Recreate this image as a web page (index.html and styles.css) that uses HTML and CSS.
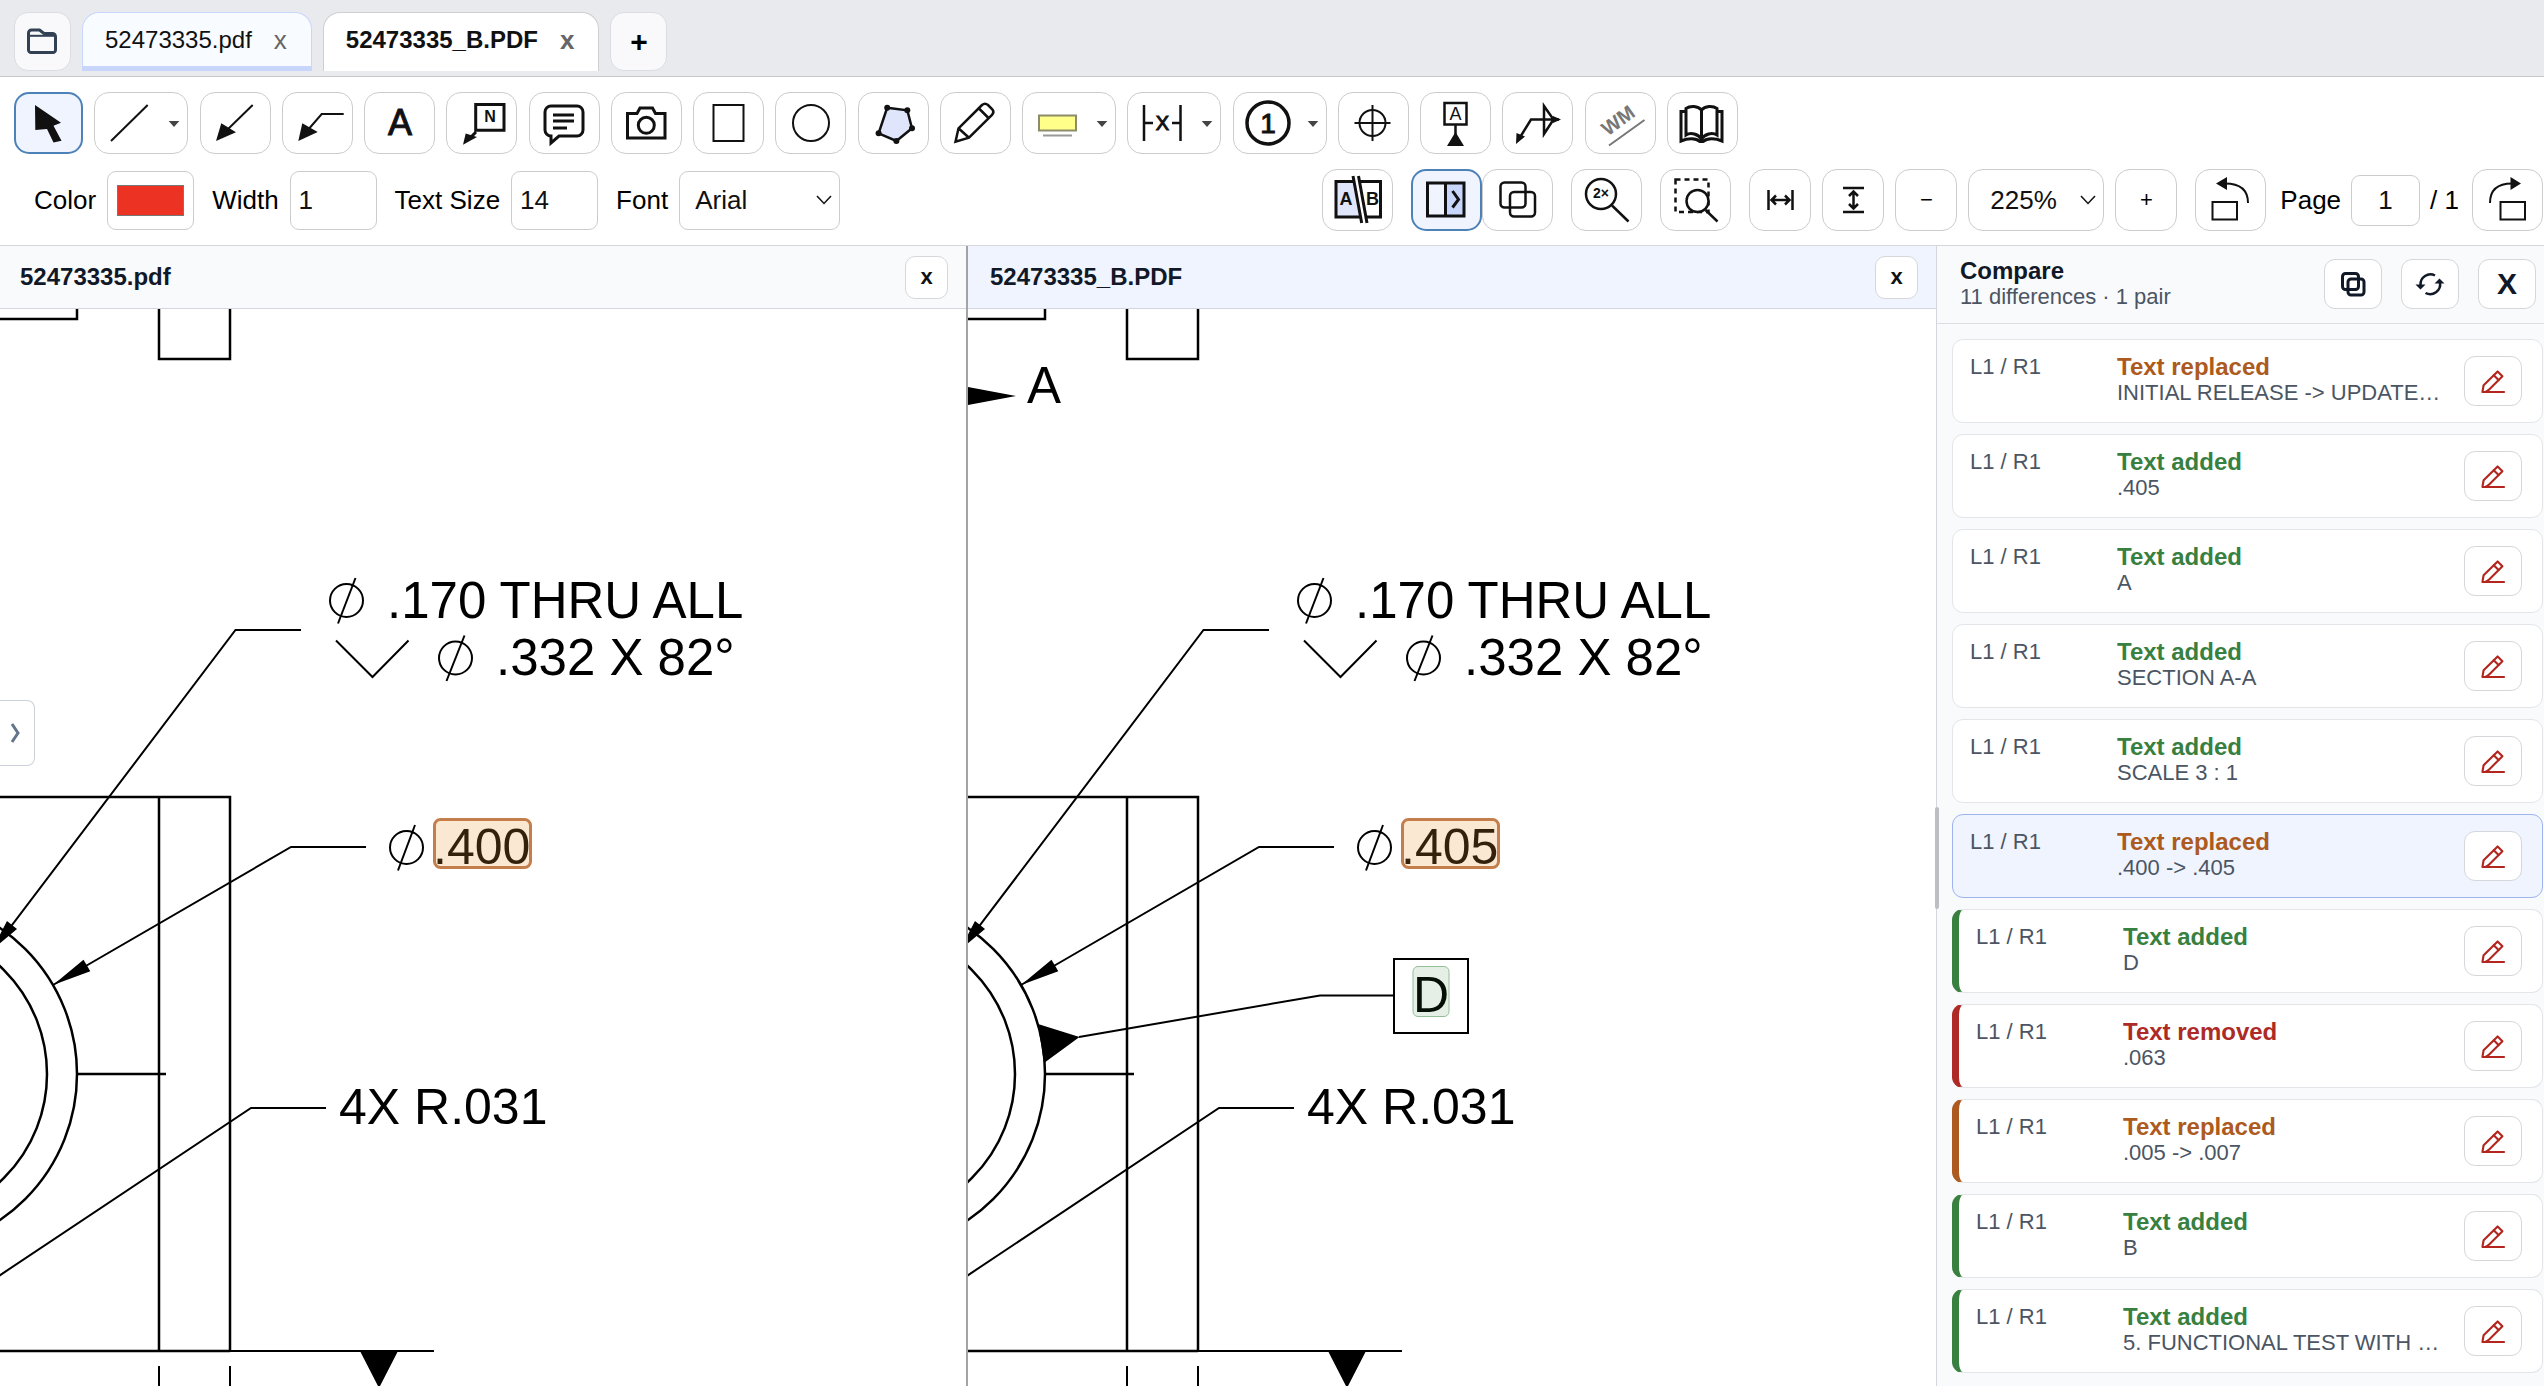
FILE: index.html
```html
<!DOCTYPE html>
<html lang="en">
<head>
<meta charset="utf-8">
<title>52473335_B.PDF</title>
<link rel="stylesheet" href="styles.css">
</head>
<body>
<svg class="sprite" aria-hidden="true">
  <symbol id="i-edit" viewBox="0 0 58 50"><g fill="none" stroke="#b3261e" stroke-width="2.2" stroke-linejoin="round" stroke-linecap="round"><path d="M18 36.4h22.5M18 36.4l1.2-7L33.8 15l5 5L25 33.8q-2 2-4 2.400z"/><path d="M29.800 19l5 5"/></g></symbol>
  <g id="part-view">
    <g fill="none" stroke="#000" stroke-width="2.500">
      <path d="M0 319H77V300M159 300V359H230V300"/>
      <path d="M0 797H230V1351M159 797V1351M0 1351H230"/>
      <circle cx="-100" cy="1074" r="177"/>
      <circle cx="-100" cy="1074" r="147"/>
      <path d="M77 1074H166"/>
    </g>
    <g fill="none" stroke="#000" stroke-width="2">
      <path d="M301 630H235.500L0 941M366 847H291L53 985M326 1108H251L-20 1288.500M230 1351H434M159 1366V1400M230 1366V1400"/>
      <circle cx="346.500" cy="600.500" r="16.500"/><path d="M355.500 578L338 623.500"/>
      <circle cx="455.500" cy="658" r="16.500"/><path d="M464.500 635.500L446.500 681"/>
      <circle cx="406.500" cy="847.500" r="16.500"/><path d="M415 825L398 870.500"/>
      <path d="M336 640.500L372.500 677L408.500 640.500"/>
    </g>
    <path d="M7 921L17 929L-8 950ZM53 985L83.500 959.700L90.300 971.300ZM360 1351H398L379 1388Z"/>
  </g>
</svg>

<header class="tabbar">
  <button class="tab-btn" aria-label="Open file"><svg width="55" height="57" viewBox="1 1 55 57" fill="none" stroke="#334155" stroke-width="3" stroke-linejoin="round"><path d="M14.500 21a3 3 0 0 1 3-3h8l4.500 3.500h8.500a3 3 0 0 1 3 3V38a2.500 2.500 0 0 1-2.500 2.500H17a2.500 2.500 0 0 1-2.500-2.500z"/><path d="M15 23.800H41" stroke-width="2"/></svg></button>
  <div class="tab"><span>52473335.pdf</span><button class="tab-x" aria-label="Close 52473335.pdf">x</button></div>
  <div class="tab active"><span>52473335_B.PDF</span><button class="tab-x" aria-label="Close 52473335_B.PDF">x</button></div>
  <button class="tab-btn plus" aria-label="New tab">+</button>
</header>

<section class="toolbar">
  <div class="tools">
    <button class="tool on" aria-label="Select"><svg viewBox="1 1 70 60"><path d="M22 13L48 30.700L40.500 33.700L48.500 48.700L40.500 50.500L34 37L22.300 38Z"/></svg></button>
    <button class="tool wide" aria-label="Line"><svg viewBox="1 1 92 60"><path class="s2" d="M17 49L53.700 13"/><path class="caret" d="M74.700 29h10.600l-5.300 6z"/></svg></button>
    <button class="tool" aria-label="Arrow"><svg viewBox="1 1 70 60"><path class="s2" d="M53.700 13L26 40"/><path d="M17 49L22.300 31.300L37 40.300Z"/></svg></button>
    <button class="tool" aria-label="Leader"><svg viewBox="1 1 70 60"><path class="s2" d="M62.700 22H40.700L26 39"/><path d="M17.300 49L21.300 31.300L36.700 40Z"/></svg></button>
    <button class="tool" aria-label="Text"><svg viewBox="1 1 70 60"><text class="medium" x="36" y="43" font-size="36">A</text></svg></button>
    <button class="tool" aria-label="Note"><svg viewBox="1 1 70 60"><path class="s3" d="M29.700 12.500H58V38.300H29.700ZM30 40L25 45"/><path d="M17 52.700L19.700 41.500L31 45Z"/><text x="44" y="30" font-size="16" font-weight="700">N</text></svg></button>
    <button class="tool" aria-label="Comment"><svg viewBox="1 1 70 60"><path class="s3" d="M23 14H49a6 6 0 0 1 6 6V38a6 6 0 0 1-6 6H31L23 51V44a6 6 0 0 1-6-6V20a6 6 0 0 1 6-6Z"/><path class="s3" d="M25 23H46M25 29H46M25 36H39"/></svg></button>
    <button class="tool" aria-label="Snapshot"><svg viewBox="1 1 70 60"><path class="s3" d="M17.500 21.500H27L30 16H42.500L45.500 21.500H55V46H17.500Z"/><circle class="s3" cx="36.300" cy="33.300" r="8"/></svg></button>
    <button class="tool" aria-label="Rectangle"><svg viewBox="1 1 70 60"><path class="s2" d="M20.500 13H50.500V49H20.500Z"/></svg></button>
    <button class="tool" aria-label="Ellipse"><svg viewBox="1 1 70 60"><circle class="s2" cx="36" cy="31" r="18"/></svg></button>
    <button class="tool" aria-label="Polygon"><svg viewBox="1 1 70 60"><path class="s25 tint" d="M30.200 15.700L50.300 18.300L55 36.300L39.400 49L21.600 41.300Z"/><circle cx="30.200" cy="15.700" r="3"/><circle cx="50.300" cy="18.300" r="3"/><circle cx="55" cy="36.300" r="3"/><circle cx="39.400" cy="49" r="3"/><circle cx="21.600" cy="41.300" r="3"/></svg></button>
    <button class="tool" aria-label="Pencil"><svg viewBox="1 1 70 60"><path class="s25" d="M16.500 49.700L19.500 36.300L43 13Q46 10.500 49 13L53.500 17.500Q55.500 20 53 23L30 45.700ZM19.500 36.300L30 45.700M40 16.500L49.500 26"/></svg></button>
    <button class="tool wide" aria-label="Highlight"><svg viewBox="1 1 92 60"><rect x="17" y="23.500" width="37" height="15" fill="#ffff8a" stroke="#8c8c6a" stroke-width="2"/><path d="M21 43.500H50" stroke="#999" stroke-width="2"/><path class="caret" d="M74.700 29h10.600l-5.300 6z"/></svg></button>
    <button class="tool wide" aria-label="Dimension"><svg viewBox="1 1 92 60"><path class="s25" d="M17 13V49M53.500 13V49M17 31H26M45 31H53.500"/><text class="medium" x="35.500" y="38" font-size="20">X</text><path class="caret" d="M74.700 29h10.600l-5.300 6z"/></svg></button>
    <button class="tool wide" aria-label="Balloon"><svg viewBox="1 1 92 60"><circle cx="35" cy="31" r="21" fill="none" stroke="#111" stroke-width="3.500"/><text class="medium" x="35" y="41" font-size="28">1</text><path class="caret" d="M74.700 29h10.600l-5.300 6z"/></svg></button>
    <button class="tool" aria-label="Center mark"><svg viewBox="1 1 70 60"><circle class="s2" cx="35.500" cy="31" r="13"/><path class="s2" d="M17.500 31H53.500M35.500 13V49"/></svg></button>
    <button class="tool" aria-label="Datum"><svg viewBox="1 1 70 60"><path class="s25" d="M24.500 11H46.500V32.500H24.500ZM35.500 33V43"/><text x="35.500" y="28" font-size="18">A</text><path d="M27 54H44L35.500 40Z"/></svg></button>
    <button class="tool" aria-label="Weld symbol"><svg viewBox="1 1 70 60"><path class="s25" d="M17 47L29 27.500H57M42 14V42L51.500 27.500Z"/><path d="M14 52L14.500 41L23 44.500ZM59 27.500L51 24V31Z"/></svg></button>
    <button class="tool" aria-label="Watermark"><svg viewBox="1 1 70 60"><path d="M25 53.500L60.500 28" stroke="#777" stroke-width="2"/><text class="wm" transform="translate(38 34) rotate(-36)" font-size="20" font-weight="700">WM</text></svg></button>
    <button class="tool" aria-label="Library"><svg viewBox="1 1 70 60"><path class="s3" d="M35.500 18V47M35.500 18C32 13.500 24 13.500 20 16.500V43C25 40 32 42 35.500 47C39 42 46 40 51 43V16.500C47 13.500 39 13.500 35.500 18M20 19.500H15V49C22 46 30 46 34 49.500H37C41 46 49 46 56 49V19.500H51"/></svg></button>
  </div>

  <div class="options">
    <div class="group fields">
      <div class="field"><label for="color">Color</label><input id="color" class="box swatch" type="color" value="#eb3223"></div>
      <div class="field"><label for="width">Width</label><input id="width" class="box num" type="text" value="1"></div>
      <div class="field"><label for="tsize">Text Size</label><input id="tsize" class="box num" type="text" value="14"></div>
      <div class="field"><label for="font">Font</label><span class="pick"><select id="font" class="box font"><option>Arial</option></select><svg width="16" height="10" viewBox="0 0 16 10"><path class="chev" d="M1 1L8 8.500L15 1"/></svg></span></div>
    </div>
    <div class="group views">
      <button class="tool" aria-label="Compare documents"><svg viewBox="1 1 70 60"><path class="s3 tint" d="M32 12.500H14V48H38"/><path class="s3" d="M38 12.500H58.500V48H45"/><path class="s3" d="M31 7L39.700 54M36.500 7L45 54"/><text x="24" y="36" font-size="18" font-weight="700">A</text><text x="50.500" y="36" font-size="18" font-weight="700">B</text></svg></button>
      <div class="pair">
        <button class="tool on" aria-label="Side by side"><svg viewBox="1 1 70 60"><path d="M34 14H53V47H34Z" fill="#c9d6fb"/><path class="s3" d="M16.500 14H53V47H16.500ZM34.500 14V47"/><path class="s3" d="M41.500 22L47.500 30.500L41.500 38.500"/></svg></button>
        <button class="tool" aria-label="Overlay"><svg viewBox="1 1 70 60"><rect class="s25" x="18.500" y="13.500" width="25" height="25" rx="4"/><rect class="s25" x="28" y="23" width="25" height="24.500" rx="4"/></svg></button>
      </div>
      <button class="tool" aria-label="Zoom 2x"><svg viewBox="1 1 70 60"><circle class="s25" cx="30" cy="25" r="15"/><path class="s25" d="M41 36.500L57.500 52.500"/><text x="30" y="29" font-size="14" font-weight="700">2×</text></svg></button>
      <button class="tool" aria-label="Zoom region"><svg viewBox="1 1 70 60"><path class="s25" stroke-dasharray="5 4" d="M15.500 10.500H48.500V43H15.500Z"/><circle class="s25 blank" cx="37.500" cy="32" r="11"/><path class="s25" d="M45.500 41L57.500 52.500"/></svg></button>
      <div class="zoom">
        <button class="tool slim" aria-label="Fit width"><svg viewBox="1 1 60 60"><path class="s25" d="M19.500 21V41M43.500 21V41M23 31H40M27 26.500L22.500 31L27 35.500M36 26.500L40.500 31L36 35.500"/></svg></button>
        <button class="tool slim" aria-label="Fit height"><svg viewBox="1 1 60 60"><path class="s25" d="M21 19H42M21 43H42M31.500 23V39M27 27L31.500 22.500L36 27M27 35L31.500 39.500L36 35"/></svg></button>
        <button class="tool slim" aria-label="Zoom out">−</button>
        <span class="pick"><select class="box pct" aria-label="Zoom"><option>225%</option></select><svg width="16" height="10" viewBox="0 0 16 10"><path class="chev" d="M1 1L8 8.500L15 1"/></svg></span>
        <button class="tool slim" aria-label="Zoom in">+</button>
      </div>
      <div class="pager">
        <button class="tool" aria-label="Rotate left"><svg viewBox="1 1 70 60"><path class="s2" d="M17.500 33H42V50.500H17.500ZM53 34Q53 14.500 30 14.500"/><path d="M21 14.500L32 8V21Z"/></svg></button>
        <label for="page">Page</label>
        <input id="page" class="box page" type="text" value="1">
        <span class="total">/ 1</span>
        <button class="tool" aria-label="Rotate right"><svg viewBox="1 1 70 60"><path class="s2" d="M28.500 33H53V50.500H28.500ZM18 34Q18 14.500 40 14.500"/><path d="M49 14.500L38.500 8V21Z"/></svg></button>
      </div>
    </div>
  </div>
</section>

<main class="work">
  <section class="pane">
    <header class="pane-head"><h2>52473335.pdf</h2><button class="close" aria-label="Close pane">x</button></header>
    <div class="sheet">
      <svg width="100%" height="100%">
        <g transform="translate(0 -309)">
          <use href="#part-view"/>
          <g font-size="51"><text x="387" y="618">.170 THRU ALL</text><text x="496" y="675">.332 X 82°</text></g>
          <g font-size="50"><text x="433" y="864">.400</text><text x="339" y="1124">4X R.031</text></g>
          <rect class="hl-rep" x="434.500" y="819.500" width="96" height="48" rx="6"/>
        </g>
      </svg>
      <button class="drawer" aria-label="Open sidebar"><svg width="12" height="22" viewBox="0 0 12 22"><path d="M3 2L9 11L3 20" fill="none" stroke="#64748b" stroke-width="3"/></svg></button>
    </div>
  </section>
  <section class="pane current">
    <header class="pane-head"><h2>52473335_B.PDF</h2><button class="close" aria-label="Close pane">x</button></header>
    <div class="sheet">
      <svg width="100%" height="100%">
        <g transform="translate(0 -309)">
          <use href="#part-view"/>
          <path d="M0 387L48 396L0 405ZM111.500 1037L70 1024L76 1063Z"/>
          <path d="M111 1037L352 995.500H426M426 959H500V1033H426Z" fill="none" stroke="#000" stroke-width="2"/>
          <g font-size="51"><text x="59" y="403">A</text><text x="387" y="618">.170 THRU ALL</text><text x="496" y="675">.332 X 82°</text></g>
          <g font-size="50"><text x="433" y="864">.405</text><text x="339" y="1124">4X R.031</text><text x="445" y="1012">D</text></g>
          <rect class="hl-rep" x="434.500" y="819.500" width="96" height="48" rx="6"/>
          <rect class="hl-add" x="445" y="966.500" width="36" height="50" rx="5"/>
        </g>
      </svg>
    </div>
  </section>

  <aside class="compare">
    <header class="cmp-head">
      <div class="cmp-title"><h2>Compare</h2><p>11 differences · 1 pair</p></div>
      <button class="mini" aria-label="Copy"><svg viewBox="1 1 56 48" fill="none" stroke="#111827" stroke-width="3"><rect x="18.500" y="14.500" width="16" height="16" rx="3"/><rect x="24" y="20" width="16" height="16" rx="3"/></svg></button>
      <button class="mini" aria-label="Refresh"><svg viewBox="1 1 56 48"><path d="M19.500 26A10 10 0 0 1 34 16.500M39 23.500A10 10 0 0 1 24.500 34" fill="none" stroke="#111827" stroke-width="2.500"/><path fill="#111827" d="M14.500 25.500H24.500L19.500 30.500ZM33.500 24.500H43.500L38.500 19.500Z"/></svg></button>
      <button class="mini big" aria-label="Close compare">X</button>
    </header>
    <ul class="diffs">
      <li class="card rep"><span class="ref">L1 / R1</span><div class="what"><strong>Text replaced</strong><p>INITIAL RELEASE -&gt; UPDATE…</p></div><button class="mini" aria-label="Mark up"><svg><use href="#i-edit"/></svg></button></li>
      <li class="card add"><span class="ref">L1 / R1</span><div class="what"><strong>Text added</strong><p>.405</p></div><button class="mini" aria-label="Mark up"><svg><use href="#i-edit"/></svg></button></li>
      <li class="card add"><span class="ref">L1 / R1</span><div class="what"><strong>Text added</strong><p>A</p></div><button class="mini" aria-label="Mark up"><svg><use href="#i-edit"/></svg></button></li>
      <li class="card add"><span class="ref">L1 / R1</span><div class="what"><strong>Text added</strong><p>SECTION A-A</p></div><button class="mini" aria-label="Mark up"><svg><use href="#i-edit"/></svg></button></li>
      <li class="card add"><span class="ref">L1 / R1</span><div class="what"><strong>Text added</strong><p>SCALE 3 : 1</p></div><button class="mini" aria-label="Mark up"><svg><use href="#i-edit"/></svg></button></li>
      <li class="card rep selected"><span class="ref">L1 / R1</span><div class="what"><strong>Text replaced</strong><p>.400 -&gt; .405</p></div><button class="mini" aria-label="Mark up"><svg><use href="#i-edit"/></svg></button></li>
      <li class="card add unread"><span class="ref">L1 / R1</span><div class="what"><strong>Text added</strong><p>D</p></div><button class="mini" aria-label="Mark up"><svg><use href="#i-edit"/></svg></button></li>
      <li class="card rem unread"><span class="ref">L1 / R1</span><div class="what"><strong>Text removed</strong><p>.063</p></div><button class="mini" aria-label="Mark up"><svg><use href="#i-edit"/></svg></button></li>
      <li class="card rep unread"><span class="ref">L1 / R1</span><div class="what"><strong>Text replaced</strong><p>.005 -&gt; .007</p></div><button class="mini" aria-label="Mark up"><svg><use href="#i-edit"/></svg></button></li>
      <li class="card add unread"><span class="ref">L1 / R1</span><div class="what"><strong>Text added</strong><p>B</p></div><button class="mini" aria-label="Mark up"><svg><use href="#i-edit"/></svg></button></li>
      <li class="card add unread"><span class="ref">L1 / R1</span><div class="what"><strong>Text added</strong><p>5. FUNCTIONAL TEST WITH …</p></div><button class="mini" aria-label="Mark up"><svg><use href="#i-edit"/></svg></button></li>
    </ul>
    <div class="grip"></div>
  </aside>
</main>
</body>
</html>
```
FILE: styles.css
```css
* { box-sizing: border-box; }
html, body { margin: 0; }
body {
  min-height: 100vh;
  display: flex;
  flex-direction: column;
  background: #fff;
  color: #000;
  font: 26px/30px "Liberation Sans", Arial, sans-serif;
}
button, input, select { font: inherit; color: inherit; margin: 0; padding: 0; }
h2, p, ul { margin: 0; padding: 0; font-size: 24px; }
.sprite { position: absolute; width: 0; height: 0; }

/* Document tabs */
.tabbar {
  display: flex;
  gap: 11px;
  padding: 12px 14px 5px;
  height: 77px;
  background: #e9eaee;
  border-bottom: 1px solid #c8c9cd;
}
.tab-btn {
  display: flex;
  align-items: center;
  justify-content: center;
  width: 57px;
  height: 59px;
  background: #f9f9fb;
  border: 1px solid #dcdde0;
  border-radius: 14px;
}
.plus { font-size: 30px; font-weight: 700; }
.tab {
  display: flex;
  align-items: center;
  gap: 22px;
  height: 59px;
  padding: 0 24px 0 22px;
  font-size: 24px;
  color: #111;
  background: #f8fbff;
  border: 1px solid #c9d6fb;
  border-bottom: 5px solid #c9d6fb;
  border-radius: 17px 17px 0 0;
}
.tab.active {
  background: #fff;
  border-color: #cfcfd2;
  border-bottom: 0;
  padding-bottom: 4px;
  font-weight: 700;
}
.tab-x { border: 0; background: none; font-size: 26px; color: #666; }

/* Toolbar */
.toolbar { border-bottom: 1px solid #d5d7db; padding: 15px 1px 14px 14px; }
.tools { display: flex; justify-content: space-between; max-width: 1724px; }
.tool {
  display: flex;
  flex: none;
  align-items: center;
  justify-content: center;
  width: 71px;
  height: 62px;
  background: #fff;
  border: 1px solid #ccc;
  border-radius: 15px;
}
.tools .wide { width: 94px; }
.tools .on { width: 69px; }
.tool.slim { width: 62px; font-size: 22px; }
.tool.on { background: #eff4fe; border: 2px solid #4d82b8; }
.tool svg { flex: none; width: 70px; height: 60px; fill: #111; text-anchor: middle; }
.tool.wide svg { width: 92px; }
.tool.slim svg { width: 60px; }
.caret { fill: #444; }
.s2, .s25, .s3, .chev { fill: none; stroke: #111; stroke-width: 2; }
.s25 { stroke-width: 2.5; }
.s3 { stroke-width: 3; }
.chev { stroke-width: 1.5; }
.tint { fill: #dfe5fb; }
.blank { fill: #fff; }
.medium { stroke: #111; stroke-width: 1; }
.wm { fill: #777; }

.options { display: flex; align-items: center; justify-content: space-between; margin-top: 15px; }
.group { display: flex; align-items: center; gap: 18px; }
.fields { padding-left: 20px; }
.field { display: flex; align-items: center; gap: 11px; }
.box { height: 59px; background: #fff; border: 1px solid #ccc; border-radius: 9px; color: #111; }
.num { width: 87px; padding: 0 8px; }
.swatch { width: 87px; padding: 13px 9px; }
.swatch::-webkit-color-swatch-wrapper { padding: 0; }
.swatch::-webkit-color-swatch { border: 1px solid #777; border-radius: 0; }
.pick { position: relative; display: flex; }
.pick svg { position: absolute; right: 8px; top: 50%; margin-top: -5px; pointer-events: none; }
.pick select { appearance: none; }
.font { width: 161px; padding-left: 15px; }
.pct { width: 136px; height: 62px; padding-left: 21px; border-radius: 15px; }
.pair { display: flex; }
.zoom { display: flex; gap: 11px; }
.pager { display: flex; align-items: center; gap: 10px; }
.pager label { padding-left: 4px; }
.page { width: 69px; height: 51px; text-align: center; }
.total { padding-right: 3px; }

/* Viewer */
.work { flex: 1; display: grid; grid-template-columns: minmax(0, 1fr) minmax(0, 1fr) 608px; }
.pane { display: flex; flex-direction: column; min-width: 0; border-right: 2px solid #a3a4a7; }
.pane.current { border-right: 0; }
.pane-head {
  display: flex;
  align-items: center;
  justify-content: space-between;
  height: 63px;
  padding: 0 18px 0 20px;
  color: #111827;
  background: #f9fafc;
  border-bottom: 1px solid #d3d6dd;
}
.current .pane-head { padding-left: 22px; background: #eff4fe; }
.close {
  width: 43px;
  height: 43px;
  font-size: 22px;
  font-weight: 700;
  color: #111;
  background: #fff;
  border: 1px solid #d5d7db;
  border-radius: 10px;
}
.sheet { flex: 1; position: relative; min-height: 0; }
.sheet > svg { position: absolute; inset: 0; }
.hl-rep { fill: rgba(235, 150, 50, .22); stroke: #c47e4c; stroke-width: 3; }
.hl-add { fill: rgba(46, 125, 50, .12); stroke: #93bf97; stroke-width: 1; }
.drawer {
  position: absolute;
  left: 0;
  top: 391px;
  width: 35px;
  height: 66px;
  padding-right: 4px;
  background: #fff;
  border: 1px solid #cbd0da;
  border-left: 0;
  border-radius: 0 8px 8px 0;
}
.drawer svg { display: block; margin: 0 auto; }

/* Compare panel */
.compare { position: relative; background: #f9fafc; border-left: 1px solid #d3d6dd; }
.cmp-head {
  display: flex;
  align-items: center;
  gap: 19px;
  height: 78px;
  padding: 0 8px 2px 23px;
  border-bottom: 1px solid #dcdee3;
}
.cmp-title { flex: 1; color: #111827; }
.cmp-title h2 { line-height: 27px; }
.cmp-title p { font-size: 22px; line-height: 26px; color: #4b5563; }
.mini {
  display: flex;
  align-items: center;
  justify-content: center;
  width: 58px;
  height: 50px;
  background: #fff;
  border: 1px solid #d5d7db;
  border-radius: 11px;
}
.mini svg { flex: none; width: 56px; height: 48px; }
.big { font-size: 30px; font-weight: 700; color: #111827; }
.diffs { display: flex; flex-direction: column; gap: 11px; padding: 15px 1px 12px 15px; list-style: none; }
.card {
  display: grid;
  grid-template-columns: 125px minmax(0, 1fr) 58px;
  column-gap: 22px;
  align-items: center;
  height: 84px;
  padding: 0 20px 0 17px;
  background: #fff;
  border: 1px solid #e3e5e9;
  border-radius: 11px;
  font-size: 22px;
  color: #4b5563;
}
.ref { align-self: start; padding-top: 12px; }
.what { align-self: start; padding-top: 14px; }
.what strong, .what p { display: block; line-height: 26px; white-space: nowrap; overflow: hidden; text-overflow: ellipsis; }
.what strong { font-size: 24px; }
.what p { font-size: 22px; }
.add strong { color: #38803f; }
.rem strong { color: #ad2a26; }
.rep strong { color: #ad5a20; }
.selected { background: #eff4fe; border-color: #9db4f0; }
.unread { border-left-width: 7px; }
.unread.add { border-left-color: #38803f; }
.unread.rem { border-left-color: #ad2a26; }
.unread.rep { border-left-color: #ad5a20; }
.grip { position: absolute; left: -2px; top: 561px; width: 4px; height: 102px; border-radius: 2px; background: #bcbec2; }
```
